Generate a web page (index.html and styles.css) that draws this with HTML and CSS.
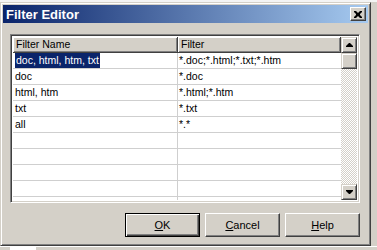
FILE: index.html
```html
<!DOCTYPE html>
<html lang="en">

<head>
    <meta charset="UTF-8">
    <title>Filter Editor</title>
    <link rel="stylesheet" href="styles.css">
</head>

<body>
    <div class="behind-top"></div>

    <!-- Dialog window -->
    <div class="window">
        <div class="titlebar">
            <span class="title">Filter Editor</span>
            <button class="close-btn" aria-label="Close">
                <svg width="8" height="7" viewBox="0 0 8 7">
                    <path d="M0 0h2l2 2 2-2h2v1l-2 2v1l2 2v1h-2l-2-2-2 2h-2v-1l2-2v-1l-2-2z" fill="#000"></path>
                </svg>
            </button>
        </div>

        <div class="client">
            <!-- List view -->
            <div class="listview">
                <div class="list-main">
                    <div class="list-header">
                        <div class="hcell col-name">Filter Name</div>
                        <div class="hcell col-filter">Filter</div>
                    </div>
                    <div class="list-rows" id="rows"></div>
                </div>
                <div class="scrollbar">
                    <div class="sb-btn">
                        <svg width="7" height="4" viewBox="0 0 7 4"><path d="M3 0h1l3 3v1h-7v-1z" fill="#000"></path></svg>
                    </div>
                    <div class="sb-thumb"></div>
                    <div class="sb-track"></div>
                    <div class="sb-btn">
                        <svg width="7" height="4" viewBox="0 0 7 4"><path d="M0 0h7v1l-3 3h-1l-3-3z" fill="#000"></path></svg>
                    </div>
                </div>
            </div>

            <!-- Buttons -->
            <div class="buttons">
                <button class="btn default"><u>O</u>K</button>
                <button class="btn"><u>C</u>ancel</button>
                <button class="btn"><u>H</u>elp</button>
            </div>
        </div>
    </div>

    <div class="behind-bottom">
        <div class="behind-box"></div>
    </div>

    <script>
        // Filter list data
        const filters = [
            ["doc, html, htm, txt", "*.doc;*.html;*.txt;*.htm"],
            ["doc", "*.doc"],
            ["html, htm", "*.html;*.htm"],
            ["txt", "*.txt"],
            ["all", "*.*"]
        ];
        const rows = document.getElementById('rows');

        // 10 rows, empty ones fill the rest of the list
        for (let i = 0; i < 10; i++) {
            const row = document.createElement('div');
            row.className = 'row';
            const f = filters[i] || ["", ""];
            const name = document.createElement('div');
            name.className = 'cell col-name';
            if (i === 0) {
                const sel = document.createElement('span');
                sel.className = 'selected';
                sel.textContent = f[0];
                name.appendChild(sel);
            } else {
                name.textContent = f[0];
            }
            const filter = document.createElement('div');
            filter.className = 'cell col-filter';
            filter.textContent = f[1];
            row.appendChild(name);
            row.appendChild(filter);
            rows.appendChild(row);
        }
    </script>
</body>

</html>
```

FILE: styles.css
```css
/* General */
body {
    margin: 0;
    width: 377px;
    height: 250px;
    overflow: hidden;
    background: #d4d0c8;
    font-family: 'Liberation Sans', Arial, sans-serif;
    font-size: 10.5px;
    color: #000;
}

.behind-top {
    height: 2px;
    background: #f4f4f4;
}

/* Window frame */
.window {
    width: 371px;
    height: 244px;
    box-sizing: border-box;
    border: 1px solid;
    border-color: #d4d0c8 #404040 #404040 #d4d0c8;
    box-shadow: inset 1px 1px #fff, inset -1px -1px #808080;
    padding: 2px;
    background: #d4d0c8;
    display: flex;
    flex-direction: column;
}

.titlebar {
    height: 18px;
    flex: none;
    display: flex;
    align-items: center;
    justify-content: space-between;
    padding: 0 2px 0 3px;
    background: linear-gradient(to right, #0a246a, #a6caf0);
}

.title {
    color: #fff;
    font-weight: bold;
    font-size: 13px;
}

.close-btn {
    width: 16px;
    height: 14px;
    padding: 0;
    box-sizing: border-box;
    border: 1px solid;
    border-color: #fff #404040 #404040 #fff;
    box-shadow: inset -1px -1px #808080;
    background: #d4d0c8;
    display: flex;
    align-items: center;
    justify-content: center;
}

.client {
    display: flex;
    flex-direction: column;
    padding: 11px 8px 0 7px;
}

/* List view */
.listview {
    height: 169px;
    box-sizing: border-box;
    border: 1px solid;
    border-color: #808080 #fff #fff #808080;
    box-shadow: inset 1px 1px #404040, inset -1px -1px #d4d0c8;
    padding: 2px;
    background: #fff;
    display: flex;
    overflow: hidden;
}

.list-main {
    flex: 1;
    overflow: hidden;
}

.list-header {
    display: grid;
    grid-template-columns: 165px 1fr;
    height: 16px;
}

.hcell {
    box-sizing: border-box;
    background: #d4d0c8;
    border-right: 1px solid #404040;
    border-bottom: 1px solid #404040;
    box-shadow: inset 1px 1px #fff, inset -1px -1px #808080;
    padding-left: 3px;
    line-height: 15px;
    white-space: nowrap;
}

.row {
    display: grid;
    grid-template-columns: 165px 1fr;
    height: 16px;
    box-sizing: border-box;
    border-bottom: 1px solid #cfcfcf;
}

.cell {
    line-height: 15px;
    white-space: nowrap;
    overflow: hidden;
}

.cell.col-name {
    border-right: 1px solid #cfcfcf;
    padding-left: 2px;
}

.cell.col-filter {
    padding-left: 1px;
}

.selected {
    display: inline-block;
    background: #0a246a;
    color: #fff;
    padding: 0 1px;
}

/* Scrollbar */
.scrollbar {
    width: 16px;
    flex: none;
    display: flex;
    flex-direction: column;
}

.sb-btn,
.sb-thumb {
    height: 16px;
    flex: none;
    box-sizing: border-box;
    border: 1px solid;
    border-color: #d4d0c8 #404040 #404040 #d4d0c8;
    box-shadow: inset 1px 1px #fff, inset -1px -1px #808080;
    background: #d4d0c8;
    display: flex;
    align-items: center;
    justify-content: center;
}

.sb-track {
    flex: 1;
    background: repeating-conic-gradient(#d4d0c8 0 25%, #fff 0 50%) 0 0 / 2px 2px;
}

/* Buttons */
.buttons {
    display: flex;
    justify-content: flex-end;
    gap: 5px;
    margin-top: 10px;
}

.btn {
    width: 75px;
    height: 24px;
    box-sizing: border-box;
    font-family: inherit;
    font-size: 11px;
    color: #000;
    background: #d4d0c8;
    border: 1px solid;
    border-color: #fff #404040 #404040 #fff;
    box-shadow: inset -1px -1px #808080;
    padding: 0;
}

.btn.default {
    border: 1px solid #000;
    box-shadow: inset 1px 1px #fff, inset -1px -1px #404040, inset -2px -2px #808080;
}

/* Stuff behind the dialog */
.behind-bottom {
    height: 4px;
    padding-left: 10px;
    border-top: 1px solid #fff;
}

.behind-box {
    width: 26px;
    height: 4px;
    background: #fff;
}
```
